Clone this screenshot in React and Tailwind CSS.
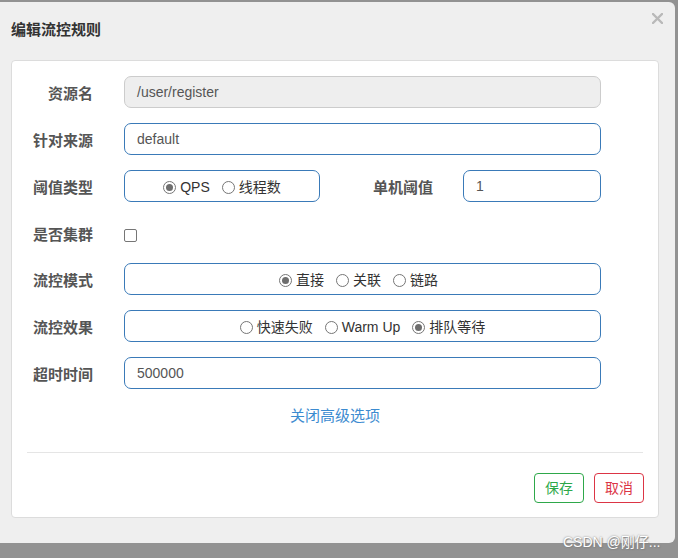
import React from "react";

const font = { fontFamily: '"Liberation Sans", "Noto Sans CJK SC", sans-serif' };

function Radio({ checked, label }) {
  return (
    <label className="flex items-center gap-[4px] text-[14px] text-[#333] pt-[2px]">
      <span className="w-[13px] h-[13px] rounded-full border border-[#767676] bg-white flex items-center justify-center">
        {checked && <span className="w-[7px] h-[7px] rounded-full bg-[#6e6e6e]" />}
      </span>
      <span>{label}</span>
    </label>
  );
}

function Label({ children }) {
  return (
    <div className="w-[81px] shrink-0 text-right text-[15px] font-bold text-[#555] mr-[31px] pt-[5px]">
      {children}
    </div>
  );
}

function TextBox({ value, disabled }) {
  return (
    <div
      className={`w-[477px] h-[32px] rounded-[7px] border px-[12px] flex items-center text-[14px] text-[#555] ${
        disabled ? "bg-[#eee] border-[#ccc]" : "bg-white border-[#3a7ab8]"
      }`}
    >
      {value}
    </div>
  );
}

function RadioBox({ children, width = "w-[477px]", extra = "" }) {
  return (
    <div className={`${width} ${extra} h-[32px] rounded-[7px] border border-[#3a7ab8] bg-white flex items-center justify-center gap-[12px]`}>
      {children}
    </div>
  );
}

export default function App() {
  return (
    <div className="relative w-[678px] h-[558px] bg-[#929292] overflow-hidden pt-[2px]" style={font}>
      {/* Dialog */}
      <div className="w-[675px] h-[541px] bg-[#efefef] rounded-tr-[6px] rounded-br-[6px] flex flex-col">
        {/* Header */}
        <div className="h-[58px] flex items-center justify-between pl-[11px] pr-[12px]">
          <h4 className="text-[15px] font-bold text-[#333] -mt-[2px]">编辑流控规则</h4>
          <svg width="11" height="11" viewBox="0 0 11 11" className="-mt-[25px]">
            <path d="M1 1 L10 10 M10 1 L1 10" stroke="#b9b9b9" strokeWidth="2.4" strokeLinecap="round" />
          </svg>
        </div>

        {/* Panel */}
        <div className="ml-[11px] w-[648px] h-[458px] bg-white border border-[#dcdcdc] rounded-[4px] pt-[15px] pb-[14px] flex flex-col">
          <div className="flex items-center h-[32px] mb-[15px]">
            <Label>资源名</Label>
            <TextBox value="/user/register" disabled />
          </div>

          <div className="flex items-center h-[32px] mb-[15px]">
            <Label>针对来源</Label>
            <TextBox value="default" />
          </div>

          <div className="flex items-center h-[32px] mb-[15px]">
            <Label>阈值类型</Label>
            <div className="w-[477px] flex items-center">
              <RadioBox width="w-[196px]">
                <Radio checked label="QPS" />
                <Radio label="线程数" />
              </RadioBox>
              <div className="flex-1 text-right text-[15px] font-bold text-[#555] mr-[30px] pt-[5px]">单机阈值</div>
              <div className="w-[138px] h-[32px] rounded-[7px] border border-[#3a7ab8] bg-white px-[12px] flex items-center text-[14px] text-[#555]">
                1
              </div>
            </div>
          </div>

          <div className="flex items-center h-[32px] mb-[14px]">
            <Label>是否集群</Label>
            <span className="w-[13px] h-[13px] mt-[4px] rounded-[2px] border border-[#767676] bg-white" />
          </div>

          <div className="flex items-center h-[32px] mb-[15px]">
            <Label>流控模式</Label>
            <RadioBox extra="pr-[8px]">
              <Radio checked label="直接" />
              <Radio label="关联" />
              <Radio label="链路" />
            </RadioBox>
          </div>

          <div className="flex items-center h-[32px] mb-[15px]">
            <Label>流控效果</Label>
            <RadioBox>
              <Radio label="快速失败" />
              <Radio label="Warm Up" />
              <Radio checked label="排队等待" />
            </RadioBox>
          </div>

          <div className="flex items-center h-[32px]">
            <Label>超时时间</Label>
            <TextBox value="500000" />
          </div>

          <div className="mt-[17px] h-[20px] text-center text-[15px] leading-[20px] text-[#3c8bd0]">
            关闭高级选项
          </div>

          <div className="mt-[26px] mx-[15px] border-t border-[#e5e5e5]" />

          <div className="mt-[20px] mr-[14px] flex justify-end gap-[10px]">
            <button className="w-[50px] h-[30px] rounded-[4px] border border-[#2ea84a] text-[14px] text-[#2ea84a] bg-white">
              保存
            </button>
            <button className="w-[50px] h-[30px] rounded-[4px] border border-[#dc3545] text-[14px] text-[#dc3545] bg-white">
              取消
            </button>
          </div>
        </div>
      </div>

      {/* Watermark */}
      <div
        className="absolute left-[563px] top-[532px] text-[14px] text-white whitespace-nowrap"
        style={{ textShadow: "0 0 2px #777, 1px 1px 1px #888" }}
      >
        CSDN @刚仔...
      </div>
    </div>
  );
}
